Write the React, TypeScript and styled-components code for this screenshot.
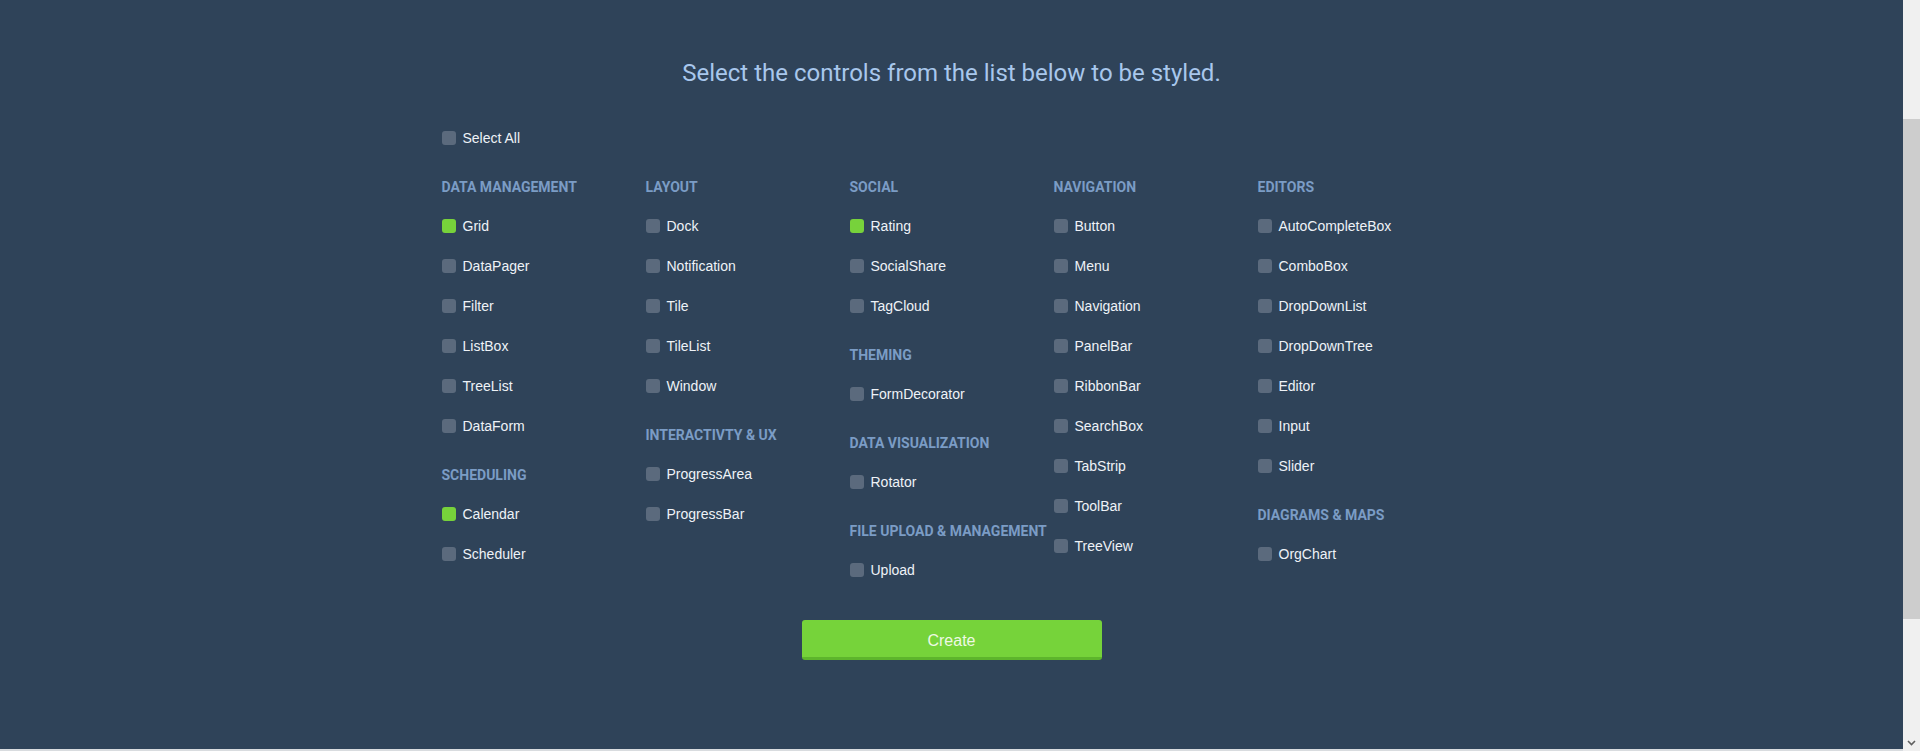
import React, { useLayoutEffect, useRef, useState } from 'react';
import styled, { createGlobalStyle } from 'styled-components';

const GlobalStyle = createGlobalStyle`
  html, body {
    margin: 0;
    height: 100%;
    overflow: hidden;
  }
  body {
    background: #2f4359;
    font-family: 'Liberation Sans', Arial, sans-serif;
  }
`;

type Group = { title: string; items: string[] };

const columns: Group[][] = [
  [
    { title: 'Data Management', items: ['Grid', 'DataPager', 'Filter', 'ListBox', 'TreeList', 'DataForm'] },
    { title: 'Scheduling', items: ['Calendar', 'Scheduler'] },
  ],
  [
    { title: 'Layout', items: ['Dock', 'Notification', 'Tile', 'TileList', 'Window'] },
    { title: 'Interactivty & UX', items: ['ProgressArea', 'ProgressBar'] },
  ],
  [
    { title: 'Social', items: ['Rating', 'SocialShare', 'TagCloud'] },
    { title: 'Theming', items: ['FormDecorator'] },
    { title: 'Data Visualization', items: ['Rotator'] },
    { title: 'File Upload & Management', items: ['Upload'] },
  ],
  [
    {
      title: 'Navigation',
      items: ['Button', 'Menu', 'Navigation', 'PanelBar', 'RibbonBar', 'SearchBox', 'TabStrip', 'ToolBar', 'TreeView'],
    },
  ],
  [
    {
      title: 'Editors',
      items: ['AutoCompleteBox', 'ComboBox', 'DropDownList', 'DropDownTree', 'Editor', 'Input', 'Slider'],
    },
    { title: 'Diagrams & Maps', items: ['OrgChart'] },
  ],
];

const SCROLL_TOP = 153;
const ARROW = 17;

const Shell = styled.div`
  display: flex;
  height: 100vh;
`;

const Scroller = styled.div`
  flex: 1;
  overflow-y: auto;
  scrollbar-width: none;
  &::-webkit-scrollbar {
    display: none;
  }
`;

const ScrollBar = styled.div`
  width: 17px;
  flex: none;
  display: flex;
  flex-direction: column;
  background: #f0f0f0;
`;

const ArrowButton = styled.div`
  height: ${ARROW}px;
  flex: none;
  display: flex;
  align-items: center;
  justify-content: center;
`;

const Track = styled.div`
  flex: 1;
`;

const Thumb = styled.div`
  background: #cdcdcd;
`;

const Hidden = styled.div`
  height: ${SCROLL_TOP}px;
`;

const Main = styled.main`
  width: 1020px;
  margin: 0 auto;
  padding: 57px 0 89px;
`;

const Title = styled.h1`
  margin: 0 0 29px;
  font-family: Roboto, 'Liberation Sans', sans-serif;
  font-weight: 400;
  font-size: 24px;
  line-height: 32px;
  color: #a8c7ec;
  text-align: center;
`;

const Grid = styled.div`
  display: grid;
  grid-template-columns: repeat(5, 204px);
  margin-top: 19px;
`;

const Column = styled.div`
  display: flex;
  flex-direction: column;
  gap: 19px;
`;

const GroupBox = styled.section`
  display: flex;
  flex-direction: column;
`;

const Heading = styled.h3`
  margin: 0 0 9px;
  font-family: Roboto, 'Liberation Sans', sans-serif;
  font-weight: 700;
  font-size: 14px;
  line-height: 20px;
  color: #7b9cc5;
  text-transform: uppercase;
  white-space: nowrap;
`;

const Row = styled.label`
  display: flex;
  align-items: center;
  height: 40px;
  font-size: 14px;
  color: #eef2f7;
  cursor: pointer;
  user-select: none;
`;

const Box = styled.span<{ $on: boolean }>`
  width: 14px;
  height: 14px;
  border-radius: 3px;
  margin-right: 7px;
  flex: none;
  background: ${({ $on }) => ($on ? '#77d23b' : '#5b6a7d')};
`;

const CreateButton = styled.button`
  display: block;
  box-sizing: border-box;
  width: 300px;
  height: 40px;
  margin: 30px auto 0;
  padding: 5px 0 0;
  border: 0;
  border-bottom: 3px solid #5db52c;
  border-radius: 3px;
  background: #76d33a;
  color: #eef9e4;
  font-family: 'Liberation Sans', Arial, sans-serif;
  font-size: 16px;
  line-height: 20px;
  cursor: pointer;
`;

const Footer = styled.div`
  height: 173px;
  background: #c9cdd2;
  border-top: 2px solid #d9dcdf;
`;

const CheckRow: React.FC<{ label: string; on: boolean; onToggle: () => void }> = ({ label, on, onToggle }) => (
  <Row onClick={onToggle}>
    <Box $on={on} />
    {label}
  </Row>
);

export default function App() {
  const [checked, setChecked] = useState<Record<string, boolean>>({ Grid: true, Rating: true, Calendar: true });
  const [thumb, setThumb] = useState({ top: 102, height: 500 });
  const scroller = useRef<HTMLDivElement>(null);
  const all = columns.flat().flatMap((g) => g.items);
  const allOn = all.every((i) => checked[i]);

  const measure = () => {
    const el = scroller.current;
    if (!el) return;
    const track = el.clientHeight - ARROW * 2;
    setThumb({
      top: (track * el.scrollTop) / el.scrollHeight,
      height: (track * el.clientHeight) / el.scrollHeight,
    });
  };

  useLayoutEffect(() => {
    if (scroller.current) scroller.current.scrollTop = SCROLL_TOP;
    measure();
  }, []);

  const toggle = (name: string) => setChecked((c) => ({ ...c, [name]: !c[name] }));
  const toggleAll = () => {
    const next: Record<string, boolean> = {};
    all.forEach((i) => (next[i] = !allOn));
    setChecked(next);
  };

  return (
    <>
      <GlobalStyle />
      <Shell>
        <Scroller ref={scroller} onScroll={measure}>
          <Hidden />
          <Main>
            <Title>Select the controls from the list below to be styled.</Title>
            <CheckRow label="Select All" on={allOn} onToggle={toggleAll} />
            <Grid>
              {columns.map((col, ci) => (
                <Column key={ci}>
                  {col.map((g) => (
                    <GroupBox key={g.title}>
                      <Heading>{g.title}</Heading>
                      {g.items.map((item) => (
                        <CheckRow key={item} label={item} on={!!checked[item]} onToggle={() => toggle(item)} />
                      ))}
                    </GroupBox>
                  ))}
                </Column>
              ))}
            </Grid>
            <CreateButton type="button">Create</CreateButton>
          </Main>
          <Footer />
        </Scroller>
        <ScrollBar>
          <ArrowButton />
          <Track>
            <Thumb style={{ marginTop: thumb.top, height: thumb.height }} />
          </Track>
          <ArrowButton>
            <svg width="9" height="6" viewBox="0 0 9 6">
              <polyline points="1,1 4.5,4.5 8,1" fill="none" stroke="#606060" strokeWidth="1.6" />
            </svg>
          </ArrowButton>
        </ScrollBar>
      </Shell>
    </>
  );
}
